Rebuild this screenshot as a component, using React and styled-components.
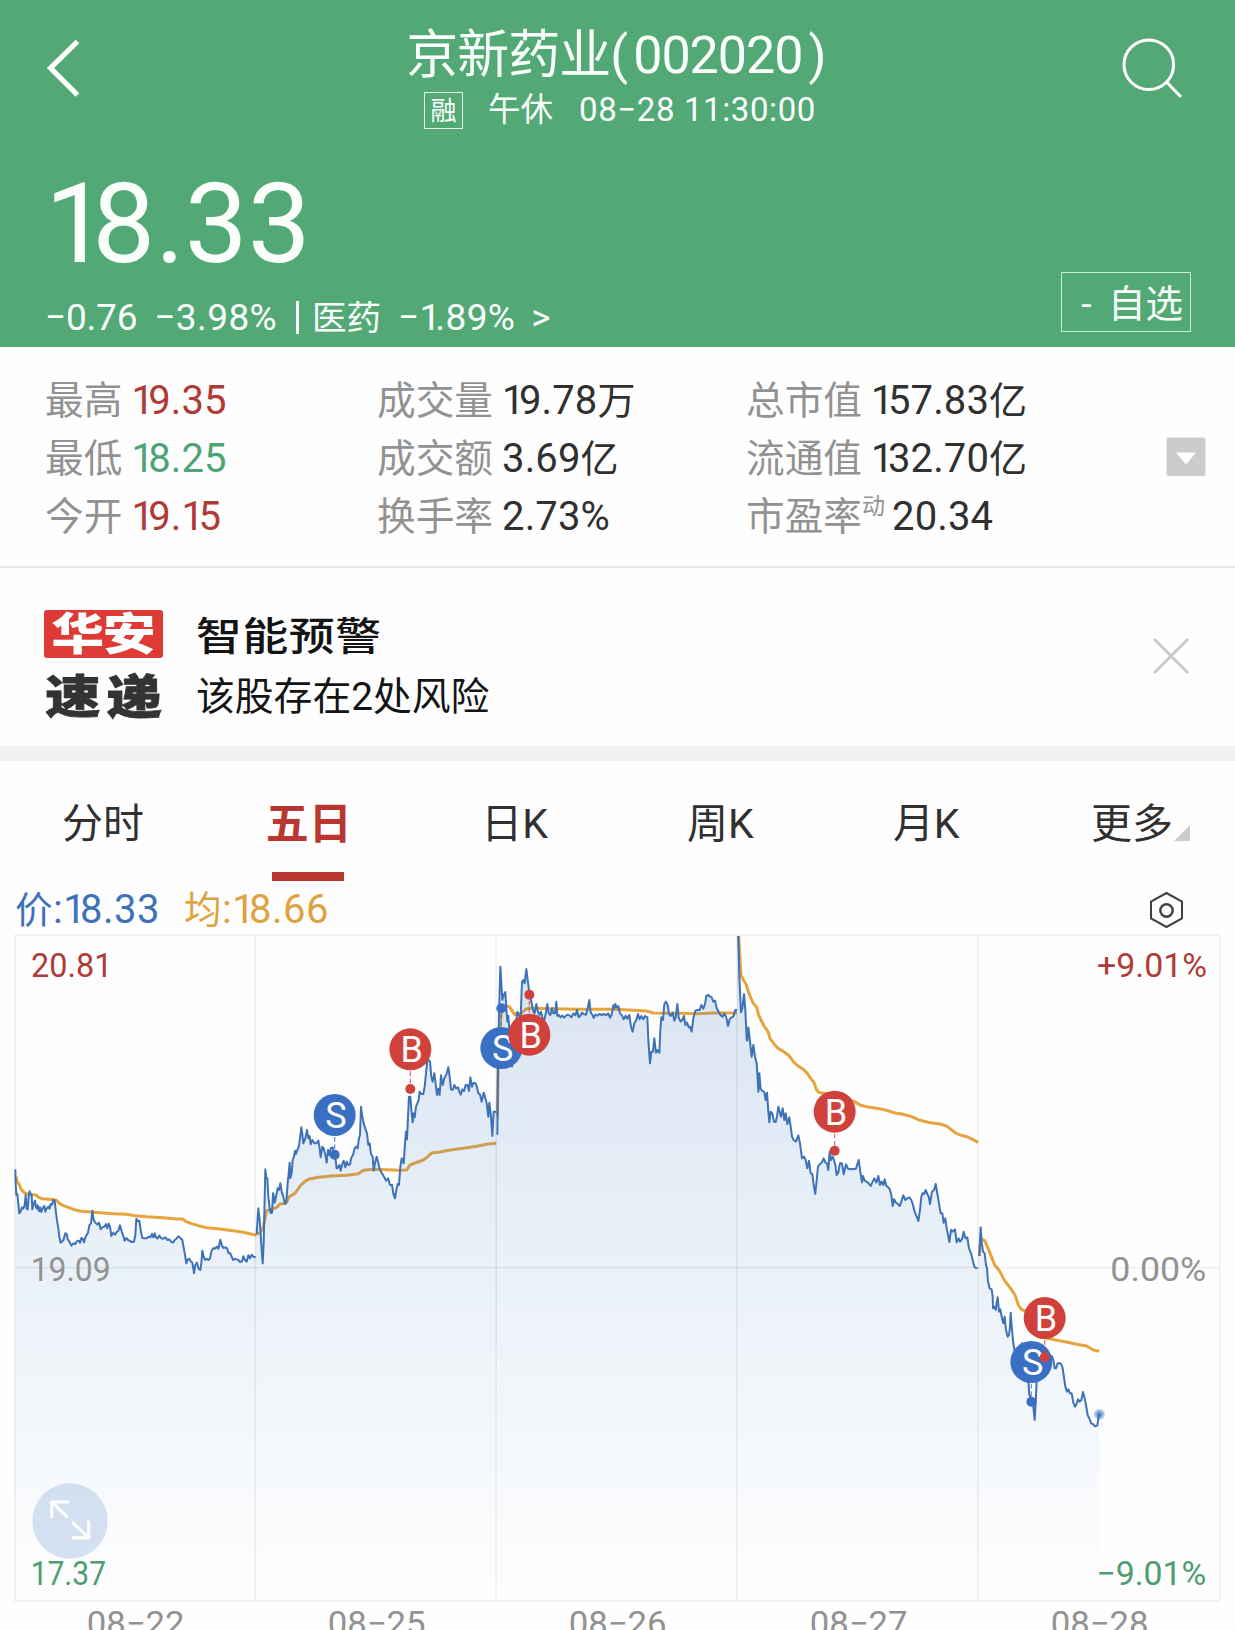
import React from "react";
import styled, { createGlobalStyle } from "styled-components";

const GREEN = "#53a975";
const RED = "#b03a35";
const BLUE = "#3e72b8";
const GRAY = "#929292";

const GlobalStyle = createGlobalStyle`
  body {
    margin: 0;
    background: #fefefe;
    font-family: Roboto, "Noto Sans CJK SC", sans-serif;
    color: #303030;
  }
`;

const Page = styled.div`
  width: 1235px;
  height: 1630px;
  overflow: hidden;
`;

// HEADER
const Header = styled.header`
  display: flex;
  flex-direction: column;
  height: 347px;
  background: ${GREEN};
  color: #fafffc;
`;

const TopBar = styled.div`
  display: grid;
  grid-template-columns: 1fr auto 1fr;
  align-items: start;
  height: 136px;
  padding: 0 52px 0 46px;
`;

const BackIcon = styled.svg`
  margin-top: 38px;
`;

const SearchIcon = styled.svg`
  margin-top: 36px;
  justify-self: end;
`;

const TitleBlock = styled.div`
  display: flex;
  flex-direction: column;
  align-items: center;
  padding-top: 32px;
`;

const Title = styled.h1`
  margin: 0 0 0 3px;
  font-size: 52px;
  font-weight: 400;
  line-height: 48px;
  letter-spacing: -1px;
  white-space: nowrap;
`;

const Code = styled.span`
  margin: 0 6px;
`;

const SubTitle = styled.div`
  display: flex;
  align-items: center;
  height: 40px;
  margin: 10px 0 0 11px;
  font-size: 33px;
  line-height: 40px;
  white-space: nowrap;
`;

const MarginBadge = styled.span`
  box-sizing: border-box;
  width: 39px;
  height: 37px;
  border: 1px solid #e3f5ea;
  font-size: 26px;
  line-height: 37px;
  text-align: center;
`;

const Session = styled.span`
  margin: 0 26px 0 25px;
  font-size: 32.5px;
`;

const Time = styled.span`
  letter-spacing: 0.6px;
`;

const Quote = styled.div`
  display: flex;
  justify-content: space-between;
  align-items: flex-end;
  flex: 1;
  padding: 0 44px 9px 45px;
`;

const Price = styled.div`
  margin-bottom: 29px;
  font-size: 112px;
  line-height: 90px;
`;

// digits are proportional: a one sits closer to what follows it
const One = styled.span`
  letter-spacing: -0.14em;
`;

const Change = styled.div`
  display: flex;
  font-size: 37px;
  line-height: 40px;
  white-space: nowrap;
`;

const ChangeItem = styled.span`
  margin-right: ${(props) => props.$gap || 0}px;
  letter-spacing: ${(props) => props.$spacing || 0}px;
`;

const Industry = styled.span`
  margin-right: 17px;
  font-size: 34.5px;
`;

const Bar = styled.span`
  width: 3px;
  height: 33px;
  margin: 3px 13px 0 1px;
  background: #fafffc;
`;

const WatchButton = styled.button`
  box-sizing: border-box;
  width: 130px;
  height: 60px;
  margin-bottom: 6px;
  padding: 0 7px 0 0;
  border: 1px solid #c9ecd8;
  background: none;
  color: inherit;
  font: inherit;
  font-size: 37.5px;
  line-height: 62px;
  text-align: right;
  word-spacing: 7px;
  white-space: nowrap;
`;

// STATS
const Stats = styled.section`
  display: grid;
  grid-template-columns: 332px 369px 1fr 40px;
  height: 221px;
  box-sizing: border-box;
  padding: 25px 29px 0 45px;
  border-bottom: 2px solid #e8e8e8;
`;

const StatColumn = styled.div`
  display: flex;
  flex-direction: column;
`;

const Stat = styled.div`
  display: flex;
  height: 58px;
  font-size: 38.7px;
  line-height: 58px;
  white-space: nowrap;
`;

const StatLabel = styled.span`
  color: ${GRAY};
`;

const StatSup = styled.span`
  margin-right: -2px;
  color: ${GRAY};
  font-size: 23px;
  line-height: 38px;
`;

const StatValue = styled.span`
  margin-left: 9px;
  color: ${(props) => props.$color || "#303030"};
  font-size: 40px;
  letter-spacing: 0.1px;
`;

const StatUnit = styled.span`
  font-size: 38px;
`;

const Expander = styled.svg`
  margin-top: 65px;
`;

// ALERT
const Alert = styled.section`
  display: flex;
  box-sizing: border-box;
  height: 193px;
  padding: 40px 46px 0 44px;
  border-bottom: 15px solid #f1f1f1;
`;

const Logo = styled.svg`
  flex: 0 0 119px;
  overflow: visible;
`;

const AlertText = styled.div`
  flex: 1;
  margin-left: 33px;
  color: #141414;
`;

const AlertTitle = styled.div`
  height: 56px;
  font-size: 38.5px;
  font-weight: 500;
  line-height: 57px;
  letter-spacing: 0.5px;
  transform: scaleX(1.19);
  transform-origin: left;
`;

const AlertMessage = styled.div`
  font-size: 38.8px;
  line-height: 65px;
`;

const CloseIcon = styled.svg`
  margin-top: 30px;
`;

// TABS
const Tabs = styled.nav`
  display: grid;
  grid-template-columns: repeat(6, 1fr);
  height: 120px;
`;

const Tab = styled.div`
  display: flex;
  flex-direction: column;
  align-items: center;
  padding-top: 33px;
  color: ${(props) => (props.$active ? "#b93730" : "#303030")};
  font-size: ${(props) => (props.$active ? 43 : 41)}px;
  font-weight: ${(props) => (props.$active ? 700 : 400)};
  line-height: 60px;
`;

const TabMark = styled.span`
  width: 72px;
  height: 9px;
  margin: 18px 1px 0 0;
  background: #b93730;
`;

const MoreLabel = styled.span`
  display: flex;
  margin-left: 17px;
`;

const MoreIcon = styled.svg`
  margin: 31px 0 0 1px;
`;

// LEGEND
const Legend = styled.div`
  display: flex;
  align-items: center;
  box-sizing: border-box;
  height: 49px;
  padding: 8px 51px 0 15px;
  font-size: 40px;
  line-height: 42px;
`;

const LegendItem = styled.span`
  width: 169px;
  color: ${(props) => props.$color};
  letter-spacing: 0.5px;
  white-space: nowrap;
`;

const LegendName = styled.span`
  font-size: 37.5px;
`;

const SettingsIcon = styled.svg`
  margin-left: auto;
`;

const ChartSvg = styled.svg`
  display: block;
  font-family: Roboto, sans-serif;
`;

// DATA
const stats = [
  [
    { label: "最高", value: "19.35", color: RED },
    { label: "最低", value: "18.25", color: "#4fa477" },
    { label: "今开", value: "19.15", color: RED },
  ],
  [
    { label: "成交量", value: "19.78", unit: "万" },
    { label: "成交额", value: "3.69", unit: "亿" },
    { label: "换手率", value: "2.73%" },
  ],
  [
    { label: "总市值", value: "157.83", unit: "亿" },
    { label: "流通值", value: "132.70", unit: "亿" },
    { label: "市盈率", sup: "动", value: "20.34" },
  ],
];

const tabs = ["分时", "五日", "日K", "周K", "月K"];

// chart space: three units per pixel, origin at the top left of the svg
const days = [
  {
    date: "08−22",
    x: 0,
    y: 0,
    price:
      "46,718 47,760 49,795 52,792 55,820 58,850 62,845 66,832 70,836 74,826 77,795 80,836 83,838 86,800 89,784 92,792 95,796 97,838 100,825 105,812 108,832 111,836 113,826 117,844 120,832 124,846 129,832 133,828 136,845 140,836 145,830 149,836 152,822 156,824 160,810 164,812 167,840 171,872 175,895 178,920 182,938 187,934 191,928 196,910 200,912 203,928 208,934 214,947 220,940 226,942 230,934 236,932 240,938 244,924 248,926 252,937 257,920 264,908 268,886 273,880 277,842 281,870 286,878 292,884 297,878 302,898 307,892 313,890 318,882 322,895 326,881 330,890 334,918 340,908 345,914 350,906 355,902 360,886 365,904 370,918 374,932 379,924 384,930 390,933 396,936 402,935 406,915 409,866 413,874 418,872 422,900 427,924 433,925 440,925 446,920 451,922 456,912 460,922 464,910 468,922 472,926 478,917 484,925 490,926 496,922 502,930 508,928 514,936 519,938 524,930 529,926 535,919 541,924 547,930 551,952 555,975 559,1000 563,988 568,986 572,994 577,998 582,1029 586,1005 591,998 596,1016 601,1020 604,1000 607,962 611,980 615,990 620,986 625,990 630,986 634,965 639,955 645,956 650,950 655,956 661,929 666,948 671,954 676,952 681,955 686,970 691,970 695,980 699,990 704,986 709,988 715,990 720,996 726,994 730,979 735,990 740,995 745,976 750,985 755,974 760,980 767,982",
    avg:
      "48,740 52,756 57,762 62,775 68,783 76,790 90,793 108,795 116,802 126,806 150,808 168,810 178,820 190,827 205,832 220,838 240,843 262,845 300,848 340,851 380,853 405,857 440,860 490,863 530,867 548,867 558,875 575,881 595,887 620,893 660,897 700,902 730,907 755,913 770,915",
  },
  {
    date: "08−25",
    x: 720,
    y: 0,
    price:
      "50,912 52,880 55,835 59,870 62,915 65,960 68,1000 71,940 73,850 76,718 79,745 82,745 85,800 89,835 92,849 96,848 99,790 102,800 104,818 108,800 113,775 117,780 121,760 125,785 130,800 135,822 139,815 143,760 146,730 149,698 151,745 155,730 158,690 162,680 165,662 168,672 172,660 176,652 180,625 184,592 187,612 190,640 196,625 201,600 205,625 209,618 212,643 217,630 223,640 229,640 235,632 239,655 242,682 247,650 251,655 256,675 260,698 264,660 268,675 272,655 278,652 282,680 287,690 290,715 294,713 298,705 302,722 306,705 311,692 316,712 320,695 325,705 330,703 334,683 339,675 344,655 349,650 353,655 357,625 360,615 363,530 367,560 371,580 376,596 381,610 385,645 389,640 393,672 398,680 401,722 406,695 410,680 415,700 420,720 426,730 432,740 438,752 444,745 450,765 456,765 460,790 465,805 469,780 473,762 477,765 481,710 485,685 491,700 495,640 498,605 501,628 504,560 507,500 511,500 514,540 518,577 521,550 524,562 528,530 532,520 536,510 539,485 544,492 550,492 554,470 558,430 562,392 566,390 570,395 574,440 578,455 583,430 588,470 591,495 595,476 599,495 603,436 608,465 613,445 619,434 625,412 629,440 633,478 638,480 643,465 648,475 654,472 658,485 662,494 667,478 672,483 677,465 683,466 687,483 691,442 696,470 701,458 707,460 711,472 715,490 720,493 725,515 731,488 735,500 740,520 745,560 748,518 753,560 757,618 761,545 769,545",
    avg:
      "50,912 60,908 70,890 75,865 80,842 95,838 110,832 120,822 138,820 148,800 165,790 180,768 195,754 208,747 235,742 275,738 320,736 355,731 370,721 400,718 440,719 480,721 500,720 510,705 525,699 550,690 562,681 575,669 600,666 630,660 670,655 710,649 740,643 769,640",
  },
  {
    date: "08−26",
    x: 1440,
    y: 0,
    price:
      "52,614 54,420 57,250 61,110 64,160 67,210 71,195 76,186 79,235 82,275 85,258 88,300 92,350 96,410 100,380 104,300 108,280 112,246 116,255 122,260 126,155 130,150 134,160 139,117 143,150 147,180 152,205 156,225 160,245 164,250 169,222 173,242 178,255 183,245 188,265 193,272 198,245 202,222 206,250 211,255 216,235 220,250 225,250 229,215 232,258 237,255 241,262 247,257 252,263 257,258 262,254 268,256 274,262 280,250 286,256 291,240 296,262 301,257 306,248 312,253 318,254 323,235 328,210 332,248 337,254 341,264 346,254 352,257 358,252 365,255 372,252 378,256 385,250 390,263 395,254 400,226 403,235 406,222 410,232 415,228 420,250 426,256 431,268 437,257 442,266 448,255 453,290 458,305 463,280 469,270 474,252 479,268 484,258 490,268 495,258 502,262 505,330 510,400 514,365 519,365 523,325 528,368 533,360 538,368 541,300 544,262 549,270 553,222 558,215 563,225 567,252 572,258 578,248 583,272 587,262 592,222 596,262 602,275 607,270 612,258 616,285 621,278 626,292 630,290 635,305 640,265 646,242 652,240 659,240 664,225 670,236 675,222 679,198 685,195 690,200 695,202 700,215 705,212 710,235 716,245 722,256 728,260 733,250 739,262 744,288 749,268 754,262 760,260 766,240 771,240",
    avg:
      "52,560 54,420 60,290 66,230 78,228 88,230 96,242 104,254 112,250 122,252 134,240 146,234 170,235 210,236 300,238 400,238 450,240 500,243 520,249 600,250 650,251 700,249 771,249",
  },
  {
    date: "08−27",
    x: 2190,
    y: 0,
    price:
      "25,18 28,140 33,247 37,235 42,192 46,240 50,330 52,332 55,292 59,325 65,380 70,345 75,380 80,400 82,430 85,485 88,430 92,478 97,482 103,487 107,510 111,488 115,545 118,577 122,545 127,550 132,575 137,576 141,560 145,530 149,545 153,560 158,535 163,570 167,550 172,582 178,562 182,590 186,620 191,630 198,635 205,616 210,640 216,685 222,680 227,690 232,715 237,692 242,730 247,732 251,765 256,792 260,750 264,710 270,702 275,698 281,685 286,698 291,700 295,720 299,665 303,690 308,680 312,690 316,705 320,735 325,728 330,700 336,700 341,733 348,703 354,716 362,718 370,717 378,716 386,690 391,725 396,757 399,738 404,752 410,755 416,760 422,768 428,755 433,745 439,758 445,738 450,765 455,755 460,765 464,748 469,768 475,772 480,780 484,795 488,828 492,808 498,818 504,822 509,828 514,815 520,796 526,810 532,805 538,802 544,810 549,825 554,845 560,860 565,873 570,840 574,800 578,790 582,792 587,780 592,792 596,800 600,822 606,785 612,780 617,762 621,785 627,820 632,850 637,850 641,878 646,865 650,895 655,920 658,936 663,900 668,905 675,898 680,937 686,925 690,935 696,928 701,905 706,925 712,922 717,955 723,970 728,990 733,1010 738,1014 743,1014",
    avg:
      "26,18 29,70 33,135 40,150 48,162 55,185 63,205 70,220 80,232 86,255 92,268 102,288 114,305 120,325 132,342 144,355 160,364 178,378 190,395 204,408 220,418 232,430 242,445 252,458 260,480 268,488 285,490 320,498 350,506 373,515 392,526 410,530 440,535 470,541 495,549 520,553 545,560 570,571 600,578 630,582 652,589 675,608 690,615 710,620 728,628 744,637",
  },
  {
    date: "08−28",
    x: 2880,
    y: 660,
    price:
      "58,318 60,270 62,232 65,275 69,305 74,310 78,345 81,355 84,395 89,415 95,418 98,440 99,475 104,470 107,480 110,458 113,442 117,485 121,478 126,505 130,520 134,500 138,540 143,560 147,555 150,530 152,488 156,540 160,580 164,604 175,600 186,580 195,600 205,690 208,735 214,745 219,760 224,810 227,760 230,690 240,640 260,630 276,618 281,635 284,655 288,655 293,640 302,640 307,650 311,675 316,710 321,725 325,718 330,730 335,730 340,758 345,770 350,762 354,748 359,755 364,750 369,726 374,745 378,765 383,795 389,808 394,820 400,823 405,829 412,826 416,800 418,793",
    avg:
      "58,318 62,270 66,268 74,272 82,290 94,320 104,345 118,362 134,392 155,420 165,435 175,465 184,478 200,485 240,560 275,568 315,575 350,583 380,588 400,600 418,604",
  },
];

const trades = [
  { type: "S", x: 1004, y: 555, dot: 674 },
  { type: "B", x: 1231, y: 358, dot: 477 },
  { type: "S", x: 1504, y: 354, dot: 235 },
  { type: "B", x: 1588, y: 314, dot: 194 },
  { type: "B", x: 2504, y: 545, dot: 662 },
  { type: "S", x: 3094, y: 1296, dot: 1415 },
  { type: "B", x: 3134, y: 1164, dot: 1282 },
];

const axisLabels = [
  { text: "20.81", x: 93, y: 140, width: 244, color: RED },
  { text: "19.09", x: 92, y: 1052, width: 240, color: GRAY },
  { text: "17.37", x: 92, y: 1965, width: 226, color: "#4f9c72" },
  { text: "+9.01%", x: 3291, y: 140, width: 330, color: RED },
  { text: "0.00%", x: 3331, y: 1052, width: 288, color: GRAY },
  { text: "−9.01%", x: 3289, y: 1965, width: 330, color: "#4f9c72" },
];

const FRAME = { left: 45, right: 3659, top: 16, middle: 1013, bottom: 2013 };
const DAY_LINES = [766, 1488, 2211, 2934];

const toPoints = (day, line) =>
  line.split(" ").map((pair) => {
    const [x, y] = pair.split(",").map(Number);
    return [x + day.x, y + day.y];
  });

// the fill starts a little early so that no gap shows between two days
const areaPath = (points, lead) => {
  const [x, y] = points[0];
  const last = points[points.length - 1];
  return `M${x - lead},${FRAME.bottom} V${y} L${points.join(" L")} L${last[0]},${FRAME.bottom} Z`;
};

const Trade = ({ trade }) => {
  const color = trade.type === "B" ? "#d1413b" : "#3a70c3";
  return (
    <g>
      <line
        x1={trade.x}
        x2={trade.x}
        y1={trade.y}
        y2={trade.dot}
        stroke={color}
        strokeWidth="4"
        strokeDasharray="14 8"
        opacity="0.7"
      />
      <circle cx={trade.x} cy={trade.y} r="63" fill={color} />
      <circle cx={trade.x} cy={trade.dot} r="15" fill={color} />
      <text x={trade.x + 4} y={trade.y + 39} fontSize="108" fill="#fff" textAnchor="middle">
        {trade.type}
      </text>
    </g>
  );
};

const Chart = () => (
  <ChartSvg width="1235" height="700" viewBox="0 0 3705 2100">
    <defs>
      <linearGradient id="area" gradientUnits="userSpaceOnUse" x1="0" y1="16" x2="0" y2="2013">
        <stop offset="0" stopColor="#3e78bc" stopOpacity="0.2" />
        <stop offset="0.5" stopColor="#3e80c8" stopOpacity="0.105" />
        <stop offset="1" stopColor="#3e80c8" stopOpacity="0" />
      </linearGradient>
      <radialGradient id="pulse">
        <stop offset="0.3" stopColor="#3a70c3" stopOpacity="0.8" />
        <stop offset="0.6" stopColor="#3a70c3" stopOpacity="0.5" />
        <stop offset="1" stopColor="#3a70c3" stopOpacity="0.2" />
      </radialGradient>
    </defs>

    <g fill="none" stroke="#e5a43c" strokeWidth="9" strokeLinejoin="round">
      {days.map((day) => (
        <polyline key={day.date} points={toPoints(day, day.avg).join(" ")} />
      ))}
    </g>
    {days.map((day, index) => (
      <path
        key={day.date}
        d={areaPath(toPoints(day, day.price), index > 0 ? 4 : 0)}
        fill="url(#area)"
      />
    ))}

    <g fill="none" stroke="#000" strokeOpacity="0.06" strokeWidth="5">
      <rect
        x={FRAME.left}
        y={FRAME.top}
        width={FRAME.right - FRAME.left}
        height={FRAME.bottom - FRAME.top}
      />
      <line x1={FRAME.left} x2={FRAME.right} y1={FRAME.middle} y2={FRAME.middle} />
      {DAY_LINES.map((x) => (
        <line key={x} x1={x} x2={x} y1={FRAME.top} y2={FRAME.bottom} />
      ))}
    </g>

    <g fill="none" stroke={BLUE} strokeWidth="6" strokeLinejoin="round">
      {days.map((day) => (
        <polyline key={day.date} points={toPoints(day, day.price).join(" ")} />
      ))}
    </g>
    <circle cx="3298" cy="1453" r="17" fill="url(#pulse)" />

    {trades.map((trade) => (
      <Trade key={trade.x} trade={trade} />
    ))}

    <circle cx="210" cy="1773" r="113" fill="#3a78c3" fillOpacity="0.2" />
    <path
      d="M206,1716 H155 V1765 M157,1718 L203,1762 M215,1823 H266 V1772 M264,1821 L217,1777"
      fill="none"
      stroke="#fff"
      strokeWidth="9"
    />

    {axisLabels.map((label) => (
      <text
        key={label.text}
        x={label.x}
        y={label.y}
        textLength={label.width}
        lengthAdjust="spacingAndGlyphs"
        fontSize="100"
        fill={label.color}
      >
        {label.text}
      </text>
    ))}
    {days.map((day, index) => (
      <text
        key={day.date}
        x={407 + index * 723}
        y="2116"
        textAnchor="middle"
        textLength="294"
        lengthAdjust="spacingAndGlyphs"
        fontSize="100"
        fill={GRAY}
      >
        {day.date}
      </text>
    ))}
  </ChartSvg>
);

const Figures = ({ children }) =>
  children.split("").map((char, index) => (char === "1" ? <One key={index}>1</One> : char));

const QuoteHeader = () => (
  <Header>
    <TopBar>
      <BackIcon width="36" height="60" viewBox="0 0 36 60" fill="none" stroke="#fff" strokeWidth="5.2">
        <path d="M31.5 3.5 L4.5 30 L31.5 57" />
      </BackIcon>
      <TitleBlock>
        <Title>
          京新药业(<Code>002020</Code>)
        </Title>
        <SubTitle>
          <MarginBadge>融</MarginBadge>
          <Session>午休</Session>
          <Time>08−28 11:30:00</Time>
        </SubTitle>
      </TitleBlock>
      <SearchIcon width="62" height="64" viewBox="0 0 62 64" fill="none" stroke="#fff" strokeWidth="3">
        <circle cx="27.8" cy="28.7" r="24.8" />
        <path d="M45.5 46 L60 61" />
      </SearchIcon>
    </TopBar>
    <Quote>
      <div>
        <Price>
          <Figures>18.33</Figures>
        </Price>
        <Change>
          <ChangeItem $gap={17} $spacing={-0.2}>−0.76</ChangeItem>
          <ChangeItem $gap={18} $spacing={0.4}>−3.98%</ChangeItem>
          <Bar />
          <Industry>医药</Industry>
          <ChangeItem $gap={16} $spacing={0.4}>
            <Figures>−1.89%</Figures>
          </ChangeItem>
          <ChangeItem>&gt;</ChangeItem>
        </Change>
      </div>
      <WatchButton>- 自选</WatchButton>
    </Quote>
  </Header>
);

const QuoteStats = () => (
  <Stats>
    {stats.map((column, index) => (
      <StatColumn key={index}>
        {column.map((stat) => (
          <Stat key={stat.label}>
            <StatLabel>{stat.label}</StatLabel>
            {stat.sup && <StatSup>{stat.sup}</StatSup>}
            <StatValue $color={stat.color}>
              <Figures>{stat.value}</Figures>
              {stat.unit && <StatUnit>{stat.unit}</StatUnit>}
            </StatValue>
          </Stat>
        ))}
      </StatColumn>
    ))}
    <Expander width="40" height="40" viewBox="0 0 40 40">
      <rect x="0.5" y="0.5" width="39" height="38.5" rx="2" fill="#ccc" />
      <path d="M10 15.5 H30 L20 27.5 Z" fill="#fff" />
    </Expander>
  </Stats>
);

const RiskAlert = () => (
  <Alert>
    <Logo width="119" height="120" viewBox="0 0 119 120" fontWeight="900">
      <rect x="0" y="2" width="119" height="48" rx="3" fill="#de3a36" />
      <g transform="scale(1.2 1)">
        <text x="6" y="42.5" fontSize="44" fill="#fff" textLength="87">
          华安
        </text>
        <text x="1" y="105" fontSize="46" fill="#333" stroke="#333" strokeWidth="0.8" textLength="97">
          速递
        </text>
      </g>
    </Logo>
    <AlertText>
      <AlertTitle>智能预警</AlertTitle>
      <AlertMessage>该股存在2处风险</AlertMessage>
    </AlertText>
    <CloseIcon width="36" height="36" viewBox="0 0 36 36" stroke="#c8c8c8" strokeWidth="2.6">
      <path d="M1 1 L35 35 M35 1 L1 35" />
    </CloseIcon>
  </Alert>
);

const App = () => (
  <Page>
    <GlobalStyle />
    <QuoteHeader />
    <QuoteStats />
    <RiskAlert />
    <Tabs>
      {tabs.map((tab) => (
        <Tab key={tab} $active={tab === "五日"}>
          {tab}
          {tab === "五日" && <TabMark />}
        </Tab>
      ))}
      <Tab>
        <MoreLabel>
          更多
          <MoreIcon width="16" height="16" viewBox="0 0 16 16">
            <path d="M16 0 V16 H0 Z" fill="#ccc" />
          </MoreIcon>
        </MoreLabel>
      </Tab>
    </Tabs>
    <Legend>
      <LegendItem $color={BLUE}>
        <LegendName>价</LegendName>
        <Figures>:18.33</Figures>
      </LegendItem>
      <LegendItem $color="#dfa241">
        <LegendName>均</LegendName>
        <Figures>:18.66</Figures>
      </LegendItem>
      <SettingsIcon width="35" height="38" viewBox="0 0 35 38" fill="none" stroke="#404040" strokeWidth="2">
        <path d="M17.5 2 L33 10.5 V27.5 L17.5 36 L2 27.5 V10.5 Z" />
        <circle cx="17.5" cy="19.5" r="6.2" strokeWidth="2.4" />
      </SettingsIcon>
    </Legend>
    <Chart />
  </Page>
);

export default App;
